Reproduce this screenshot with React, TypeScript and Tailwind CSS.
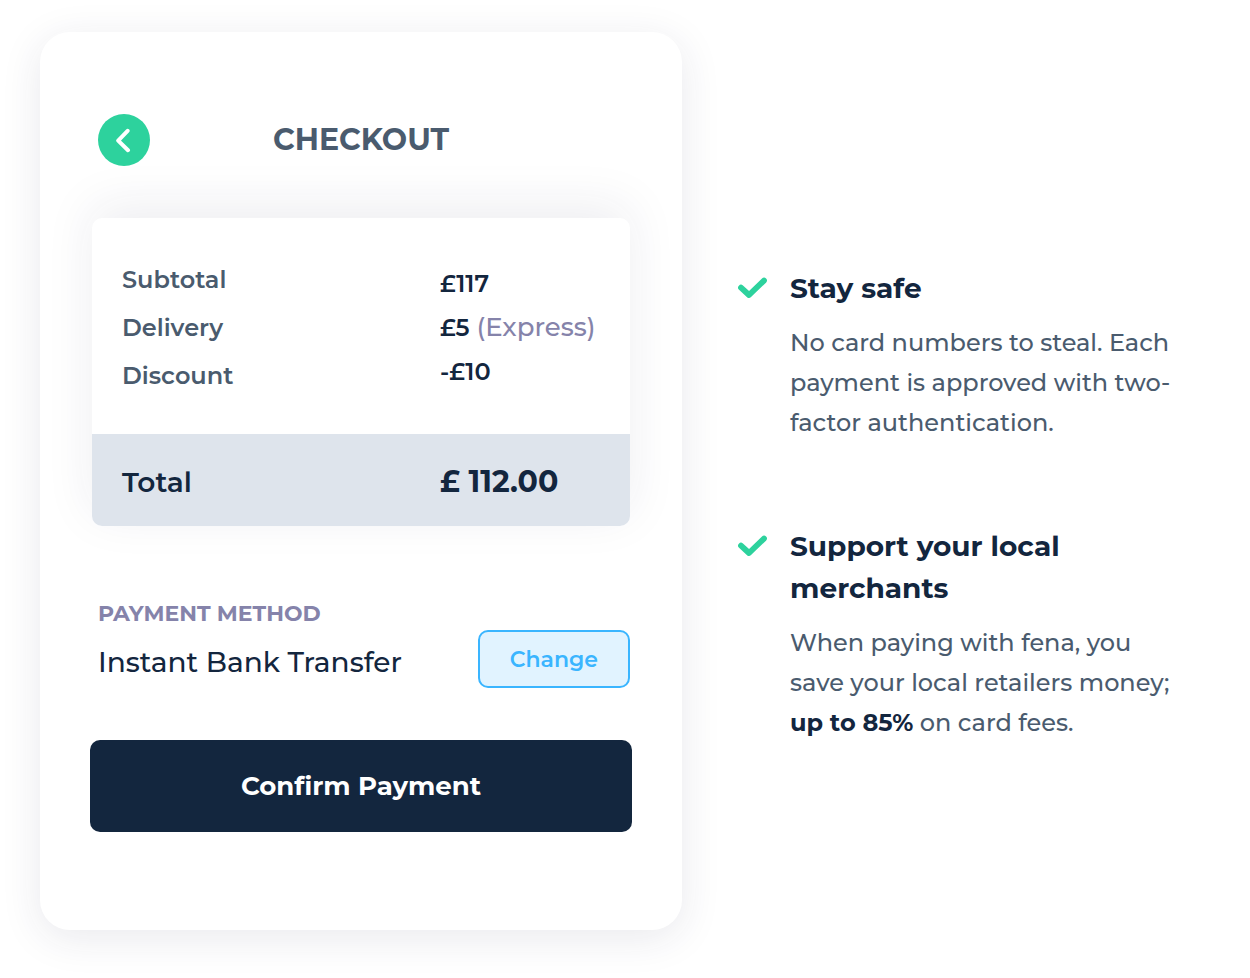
import React from 'react';

const LABELS = ['Subtotal', 'Delivery', 'Discount'];

const VALUES = [
    { amount: '£117' },
    { amount: '£5', note: '(Express)' },
    { amount: '-£10' },
];

const BENEFITS = [
    {
        title: 'Stay safe',
        body: <>No card numbers to steal. Each payment is approved with two-factor authentication.</>,
    },
    {
        title: 'Support your local merchants',
        body: (
            <>
                When paying with fena, you save your local retailers money;{' '}
                <strong className="font-bold text-[#13263e]">up to 85%</strong> on card fees.
            </>
        ),
    },
];

const CheckIcon = () => (
    <svg width="30" height="22" viewBox="0 0 30 22" fill="none" className="mt-2.5 shrink-0" aria-hidden="true">
        <path d="M3 10.6L11 18L26 3.6" stroke="#2dd29d" strokeWidth="5.8" strokeLinecap="round" strokeLinejoin="round" />
    </svg>
);

const OrderSummary = () => (
    <section className="mx-0.5 mt-13 overflow-hidden rounded-[10px] bg-white shadow-[0_-12px_50px_rgba(40,35,80,0.08)]">
        <div className="grid grid-cols-[318fr_190fr] items-center pt-9.5 pb-8.5 pl-7.5 text-2xl">
            <ul className="font-semibold text-[#4a5b6e]">
                {LABELS.map((label) => (
                    <li key={label} className="leading-12">{label}</li>
                ))}
            </ul>
            <ul className="font-semibold text-[#13263e]">
                {VALUES.map(({ amount, note }) => (
                    <li key={amount} className="leading-11 whitespace-nowrap">
                        {amount}
                        {note && <span className="text-[26px] leading-none font-medium text-[#8583aa]"> {note}</span>}
                    </li>
                ))}
            </ul>
        </div>
        <div className="grid grid-cols-[318fr_190fr] items-center bg-[#dee4ec] pt-6.5 pb-5.5 pl-7.5 leading-11 text-[#13263e]">
            <span className="text-[28px] font-semibold">Total</span>
            <span className="text-[30px] font-bold">£ 112.00</span>
        </div>
    </section>
);

export default function App() {
    return (
        <main className="grid grid-cols-[642fr_448fr] items-start gap-14 bg-white pt-8 pr-16 pb-12 pl-10 font-['Montserrat','Inter',sans-serif]">
            <div className="rounded-[30px] bg-white px-12.5 pt-20.5 pb-24.5 shadow-[0_8px_40px_rgba(40,35,80,0.1)]">
                <header className="grid grid-cols-[52px_1fr_52px] items-center px-2">
                    <button
                        type="button"
                        aria-label="Back"
                        className="flex size-13 items-center justify-center rounded-full bg-[#2dd29d]"
                    >
                        <svg width="16" height="26" viewBox="0 0 16 26" fill="none" aria-hidden="true">
                            <path d="M11.6 3.8L2.2 13.6L12 23.2" stroke="white" strokeWidth="4" strokeLinecap="round" strokeLinejoin="round" />
                        </svg>
                    </button>
                    <h1 className="text-center text-[30px] leading-12 font-bold text-[#4a5b6e]">CHECKOUT</h1>
                </header>

                <OrderSummary />

                <section className="mx-0.5 mt-16 flex items-end justify-between pl-1.5">
                    <div className="pb-0.5">
                        <h2 className="text-[22px] leading-12 font-bold text-[#8583aa]">PAYMENT METHOD</h2>
                        <p className="text-[28px] leading-12 font-medium text-[#13263e]">Instant Bank Transfer</p>
                    </div>
                    <button
                        type="button"
                        className="h-14.5 rounded-[10px] border-2 border-[#3ab5ff] bg-[#e1f3ff] px-7.5 text-[22px] font-semibold text-[#3ab5ff]"
                    >
                        Change
                    </button>
                </section>

                <button
                    type="button"
                    className="mt-13 h-23 w-full rounded-[10px] bg-[#13263e] text-[26px] font-bold text-white"
                >
                    Confirm Payment
                </button>
            </div>

            <aside className="flex flex-col gap-20.5 pt-[235px]">
                {BENEFITS.map(({ title, body }) => (
                    <div key={title} className="flex gap-5.5">
                        <CheckIcon />
                        <div>
                            <h3 className="text-[28px] leading-10.5 font-bold text-[#13263e]">{title}</h3>
                            <p className="mt-3.5 text-2xl leading-10 font-medium text-[#4a5b6e]">{body}</p>
                        </div>
                    </div>
                ))}
            </aside>
        </main>
    );
}
